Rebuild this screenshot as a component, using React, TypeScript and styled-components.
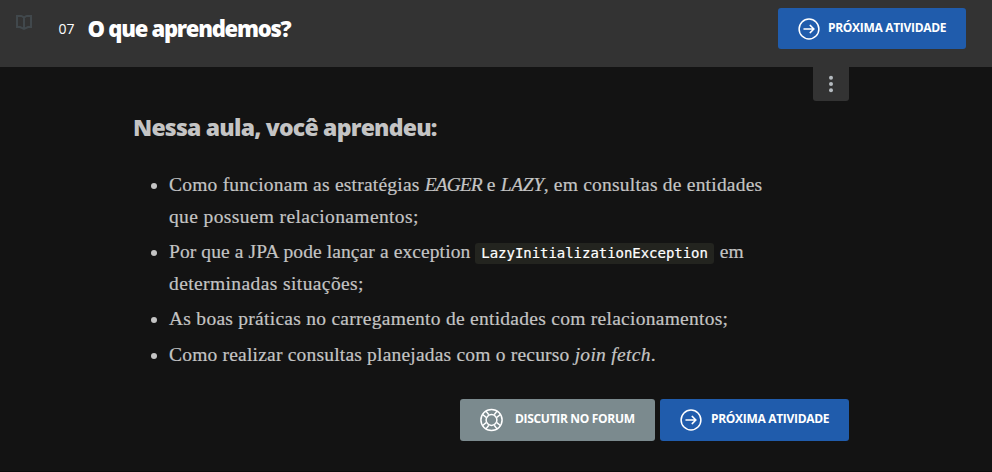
import React from "react";
import styled, { createGlobalStyle } from "styled-components";

const GlobalStyle = createGlobalStyle`
  * { box-sizing: border-box; }
  body { margin: 0; background: #131313; }
`;

const Page = styled.div`
  width: 992px;
  height: 472px;
  overflow: hidden;
  background: #131313;
  border-bottom: 1px solid #0b0b0b;
  font-family: "Open Sans", sans-serif;
`;

const Header = styled.header`
  display: flex;
  align-items: flex-start;
  height: 67px;
  padding: 8px 26px 0 16px;
  background: #333333;
`;

const BookIcon = styled.svg`
  display: block;
  width: 16px;
  height: 17px;
  margin-top: 6px;
`;

const TaskNumber = styled.span`
  width: 29px;
  margin-left: 26.5px;
  font-size: 14px;
  font-weight: 500;
  line-height: 41px;
  color: #ffffff;
`;

const TaskTitle = styled.h1`
  flex: 1;
  margin: 0;
  font-size: 22px;
  font-weight: 800;
  line-height: 41px;
  letter-spacing: -1.25px;
  white-space: nowrap;
  color: #ffffff;
`;

const Button = styled.button<{ $tone: "blue" | "gray"; $width: number; $height: number; $gap: number }>`
  display: flex;
  align-items: center;
  flex: none;
  width: ${(p) => p.$width}px;
  height: ${(p) => p.$height}px;
  gap: ${(p) => p.$gap}px;
  padding: 0 0 0 20px;
  border: 0;
  border-radius: 3px;
  background: ${(p) => (p.$tone === "blue" ? "#205cac" : "#7b8a8e")};
  color: #ffffff;
  font: 700 12px/16px "Open Sans", sans-serif;
  white-space: nowrap;
`;

const ButtonLabel = styled.span<{ $tracking: number }>`
  margin-top: -2px;
  letter-spacing: ${(p) => p.$tracking}px;
`;

const Content = styled.main`
  width: 716px;
  margin-left: 133px;
`;

const MenuRow = styled.div`
  display: flex;
  justify-content: flex-end;
`;

const MenuButton = styled.button`
  display: flex;
  align-items: center;
  justify-content: center;
  width: 36px;
  height: 34px;
  padding: 0 0 1px;
  border: 0;
  border-radius: 0 0 3px 3px;
  background: #333333;
`;

const SectionTitle = styled.h2`
  margin: 10px 0 0;
  font-size: 23px;
  font-weight: 800;
  line-height: 32px;
  letter-spacing: -0.78px;
  white-space: nowrap;
  color: #c4c4c4;
`;

const List = styled.ul`
  margin: 26px 0 0;
  padding: 0;
  list-style: none;
`;

const Item = styled.li`
  display: flex;
  margin-bottom: 4px;
  font-family: "Source Serif Pro", "Liberation Serif", serif;
  font-size: 19.5px;
  line-height: 31.6px;
  color: #c4c4c4;
  -webkit-text-stroke: 0.2px #c4c4c4;
`;

const Bullet = styled.span`
  flex: none;
  width: 6px;
  height: 6px;
  margin: 14px 12px 0 18px;
  border-radius: 50%;
  background: #c4c4c4;
`;

const Line = styled.div<{ $tracking: number }>`
  height: 31.6px;
  white-space: nowrap;
  letter-spacing: ${(p) => p.$tracking}px;
`;

const Em = styled.em<{ $tracking: number }>`
  letter-spacing: ${(p) => p.$tracking}px;
`;

const Code = styled.code`
  margin-right: 1px;
  padding: 2px 6px 3px;
  border-radius: 3px;
  background: #23241f;
  color: #ffffff;
  font: 14px/20px "DejaVu Sans Mono", monospace;
  letter-spacing: -0.04px;
  -webkit-text-stroke: 0.2px #ffffff;
`;

const Actions = styled.div`
  display: flex;
  justify-content: flex-end;
  gap: 5px;
  margin-top: 28px;
`;

const ArrowIcon = () => (
  <svg width="22" height="22" viewBox="0 0 22 22" fill="none" stroke="#fff" strokeWidth="1.5">
    <circle cx="11" cy="11" r="9.9" />
    <path d="M6 11h10M12.2 7.4l3.7 3.6-3.7 3.6" strokeLinecap="round" strokeLinejoin="round" />
  </svg>
);

const ForumIcon = () => (
  <svg width="24" height="24" viewBox="0 0 24 24" fill="none" stroke="#fff" strokeWidth="1.5">
    <circle cx="11.5" cy="12" r="10.6" />
    <circle cx="11.5" cy="12" r="5.4" />
    <path d="M6.200 9.300 2.600 6.500M8.800 6.700 6 3.100M14.200 6.700 17 3.100M16.800 9.300l3.600-2.800M6.200 14.700l-3.600 2.800M8.800 17.300 6 20.900M14.200 17.300l2.800 3.600M16.800 14.700l3.600 2.800" />
  </svg>
);

export default function App() {
  return (
    <Page>
      <GlobalStyle />
      <Header>
        <BookIcon viewBox="0 0 16 17" fill="none" stroke="#41484c" strokeWidth="2">
          <path d="M1 2h4.500L8 3.500 10.500 2H15v11h-3l-4 2-4-2H1zM8 3.500V15" />
        </BookIcon>
        <TaskNumber>07</TaskNumber>
        <TaskTitle>O que aprendemos?</TaskTitle>
        <Button $tone="blue" $width={188} $height={41} $gap={8}>
          <ArrowIcon />
          <ButtonLabel $tracking={-0.31}>PRÓXIMA ATIVIDADE</ButtonLabel>
        </Button>
      </Header>
      <Content>
        <MenuRow>
          <MenuButton aria-label="Menu">
            <svg width="4" height="18" viewBox="0 0 4 18" fill="#b5bbc0">
              <circle cx="2" cy="2.700" r="2" />
              <circle cx="2" cy="9" r="2" />
              <circle cx="2" cy="15.300" r="2" />
            </svg>
          </MenuButton>
        </MenuRow>
        <SectionTitle>Nessa aula, você aprendeu:</SectionTitle>
        <List>
          <Item>
            <Bullet />
            <div>
              <Line $tracking={0.22}>
                Como funcionam as estratégias <Em $tracking={-0.95}>EAGER</Em> e <Em $tracking={-0.4}>LAZY</Em>, em consultas de entidades
              </Line>
              <Line $tracking={0.37}>que possuem relacionamentos;</Line>
            </div>
          </Item>
          <Item>
            <Bullet />
            <div>
              <Line $tracking={0.1}>
                Por que a JPA pode lançar a exception <Code>LazyInitializationException</Code> em
              </Line>
              <Line $tracking={0.4}>determinadas situações;</Line>
            </div>
          </Item>
          <Item>
            <Bullet />
            <Line $tracking={0.27}>As boas práticas no carregamento de entidades com relacionamentos;</Line>
          </Item>
          <Item>
            <Bullet />
            <Line $tracking={0.2}>
              Como realizar consultas planejadas com o recurso <Em $tracking={0.3}>join fetch</Em>.
            </Line>
          </Item>
        </List>
        <Actions>
          <Button $tone="gray" $width={195} $height={42} $gap={11}>
            <ForumIcon />
            <ButtonLabel $tracking={-0.31}>DISCUTIR NO FORUM</ButtonLabel>
          </Button>
          <Button $tone="blue" $width={189} $height={42} $gap={9}>
            <ArrowIcon />
            <ButtonLabel $tracking={-0.31}>PRÓXIMA ATIVIDADE</ButtonLabel>
          </Button>
        </Actions>
      </Content>
    </Page>
  );
}
